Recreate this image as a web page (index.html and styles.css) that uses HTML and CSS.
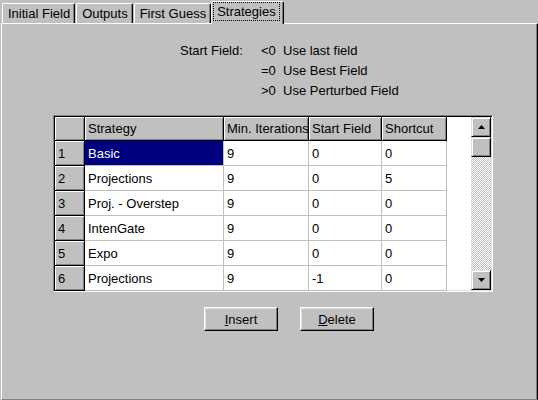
FILE: index.html
```html
<!DOCTYPE html>
<html>
<head>
<meta charset="utf-8">
<link rel="stylesheet" href="styles.css">
</head>
<body>
<div class="window">
  <div class="tabs">
    <div class="tab">Initial Field</div>
    <div class="tab">Outputs</div>
    <div class="tab">First Guess</div>
    <div class="tab active"><span class="focus">Strategies</span></div>
  </div>
  <div class="panel">
    <div class="legend">
      <div class="legend-label">Start Field:</div>
      <div class="legend-list">
        <div class="legend-row"><span class="op">&lt;0</span><span>Use last field</span></div>
        <div class="legend-row"><span class="op">=0</span><span>Use Best Field</span></div>
        <div class="legend-row"><span class="op">&gt;0</span><span>Use Perturbed Field</span></div>
      </div>
    </div>
    <div class="grid-wrap">
      <div class="grid">
        <table class="table">
          <colgroup>
            <col class="c0"><col class="c1"><col class="c2"><col class="c3"><col class="c4">
          </colgroup>
          <thead>
            <tr><th></th><th>Strategy</th><th>Min. Iterations</th><th>Start Field</th><th>Shortcut</th></tr>
          </thead>
          <tbody>
            <tr><th>1</th><td class="sel">Basic</td><td>9</td><td>0</td><td>0</td></tr>
            <tr><th>2</th><td>Projections</td><td>9</td><td>0</td><td>5</td></tr>
            <tr><th>3</th><td>Proj. - Overstep</td><td>9</td><td>0</td><td>0</td></tr>
            <tr><th>4</th><td>IntenGate</td><td>9</td><td>0</td><td>0</td></tr>
            <tr><th>5</th><td>Expo</td><td>9</td><td>0</td><td>0</td></tr>
            <tr><th>6</th><td>Projections</td><td>9</td><td>-1</td><td>0</td></tr>
          </tbody>
        </table>
        <div class="filler"></div>
        <div class="scrollbar">
          <div class="sbtn"><svg width="7" height="4" viewBox="0 0 7 4"><path d="M3.5 0 L7 4 L0 4 Z" fill="#000"/></svg></div>
          <div class="thumb"></div>
          <div class="track"></div>
          <div class="sbtn"><svg width="7" height="4" viewBox="0 0 7 4"><path d="M0 0 L7 0 L3.5 4 Z" fill="#000"/></svg></div>
        </div>
      </div>
    </div>
    <div class="buttons">
      <div class="btn"><u>I</u>nsert</div>
      <div class="btn"><u>D</u>elete</div>
    </div>
  </div>
</div>
</body>
</html>
```
FILE: styles.css
```css
html, body {
  margin: 0;
  padding: 0;
  background: #c0c0c0;
}
body {
  font-family: "Liberation Sans", Arial, sans-serif;
  font-size: 13px;
  color: #000;
}
.window {
  width: 538px;
  height: 400px;
  display: flex;
  flex-direction: column;
  box-sizing: border-box;
}
.tabs {
  display: flex;
  align-items: flex-end;
  height: 23px;
  padding-left: 2px;
}
.tab {
  height: 20px;
  box-sizing: border-box;
  padding: 1px 4px 0 5px;
  border-left: 1px solid #fff;
  border-top: 1px solid #fff;
  border-right: 1px solid #000;
  box-shadow: inset -1px 0 #808080;
  border-radius: 2px 2px 0 0;
  margin-right: 1px;
  line-height: 17px;
  white-space: nowrap;
}
.tab.active {
  height: 23px;
  padding: 1px 4px 0 2px;
  margin-left: -1px;
  position: relative;
  z-index: 1;
  margin-bottom: -1px;
  background: #c0c0c0;
}
.focus {
  display: inline-block;
  outline: 1px dotted #000;
  padding: 0 3px;
  line-height: 17px;
}
.panel {
  flex: 1;
  border-top: 1px solid #fff;
  border-left: 1px solid #fff;
  border-right: 1px solid #000;
  border-bottom: 1px solid #808080;
  box-shadow: inset -1px 0 #808080;
  margin-left: 1px;
  display: flex;
  flex-direction: column;
}
.legend {
  display: flex;
  padding: 17px 0 0 178px;
  height: 74px;
  box-sizing: border-box;
}
.legend-label {
  width: 81px;
  line-height: 20px;
}
.legend-list {
  display: flex;
  flex-direction: column;
}
.legend-row {
  line-height: 20px;
  display: flex;
}
.op {
  width: 22px;
}
.grid-wrap {
  padding-left: 51px;
  margin-top: 17px;
}
.grid {
  width: 440px;
  height: 177px;
  box-sizing: border-box;
  border-top: 1px solid #808080;
  border-left: 1px solid #808080;
  border-right: 1px solid #fff;
  border-bottom: 1px solid #fff;
  box-shadow: inset 1px 1px #000, inset -1px -1px #dfdfdf;
  padding: 1px;
  display: flex;
  background: #fff;
}
.table {
  border-collapse: separate;
  border-spacing: 0;
  table-layout: fixed;
  width: 392px;
  align-self: flex-start;
}
.c0 { width: 30px; }
.c1 { width: 139px; }
.c2 { width: 85px; }
.c3 { width: 73px; }
.c4 { width: 65px; }
th, td {
  font-weight: normal;
  text-align: left;
  padding: 0 0 0 3px;
  white-space: nowrap;
  overflow: hidden;
  box-sizing: border-box;
}
thead th {
  height: 24px;
  background: #c0c0c0;
  border-right: 1px solid #000;
  border-bottom: 1px solid #000;
  box-shadow: inset 1px 1px #fff, inset -1px -1px #808080;
  padding-left: 3px;
}
tbody th {
  height: 25px;
  background: #c0c0c0;
  border-right: 1px solid #000;
  border-bottom: 1px solid #000;
  box-shadow: inset 1px 1px #fff, inset -1px -1px #808080;
  padding-left: 3px;
}
tbody td {
  height: 25px;
  border-right: 1px solid #c0c0c0;
  border-bottom: 1px solid #c0c0c0;
  background: #fff;
}
td.sel {
  background: #000080;
  color: #fff;
}
.filler {
  flex: 1;
}
.scrollbar {
  width: 20px;
  display: flex;
  flex-direction: column;
}
.sbtn, .thumb {
  height: 20px;
  box-sizing: border-box;
  background: #c0c0c0;
  border-top: 1px solid #dfdfdf;
  border-left: 1px solid #dfdfdf;
  border-right: 1px solid #000;
  border-bottom: 1px solid #000;
  box-shadow: inset 1px 1px #fff, inset -1px -1px #808080;
  display: flex;
  align-items: center;
  justify-content: center;
}
.track {
  flex: 1;
  background: repeating-conic-gradient(#c0c0c0 0 25%, #fff 0 50%) 0 0 / 2px 2px;
}
.buttons {
  display: flex;
  gap: 22px;
  padding-left: 202px;
  margin-top: 15px;
}
.btn {
  width: 74px;
  height: 24px;
  box-sizing: border-box;
  border-top: 1px solid #fff;
  border-left: 1px solid #fff;
  border-right: 1px solid #000;
  border-bottom: 1px solid #000;
  box-shadow: inset -1px -1px #808080, inset 1px 1px #dfdfdf;
  display: flex;
  align-items: center;
  justify-content: center;
}
```
